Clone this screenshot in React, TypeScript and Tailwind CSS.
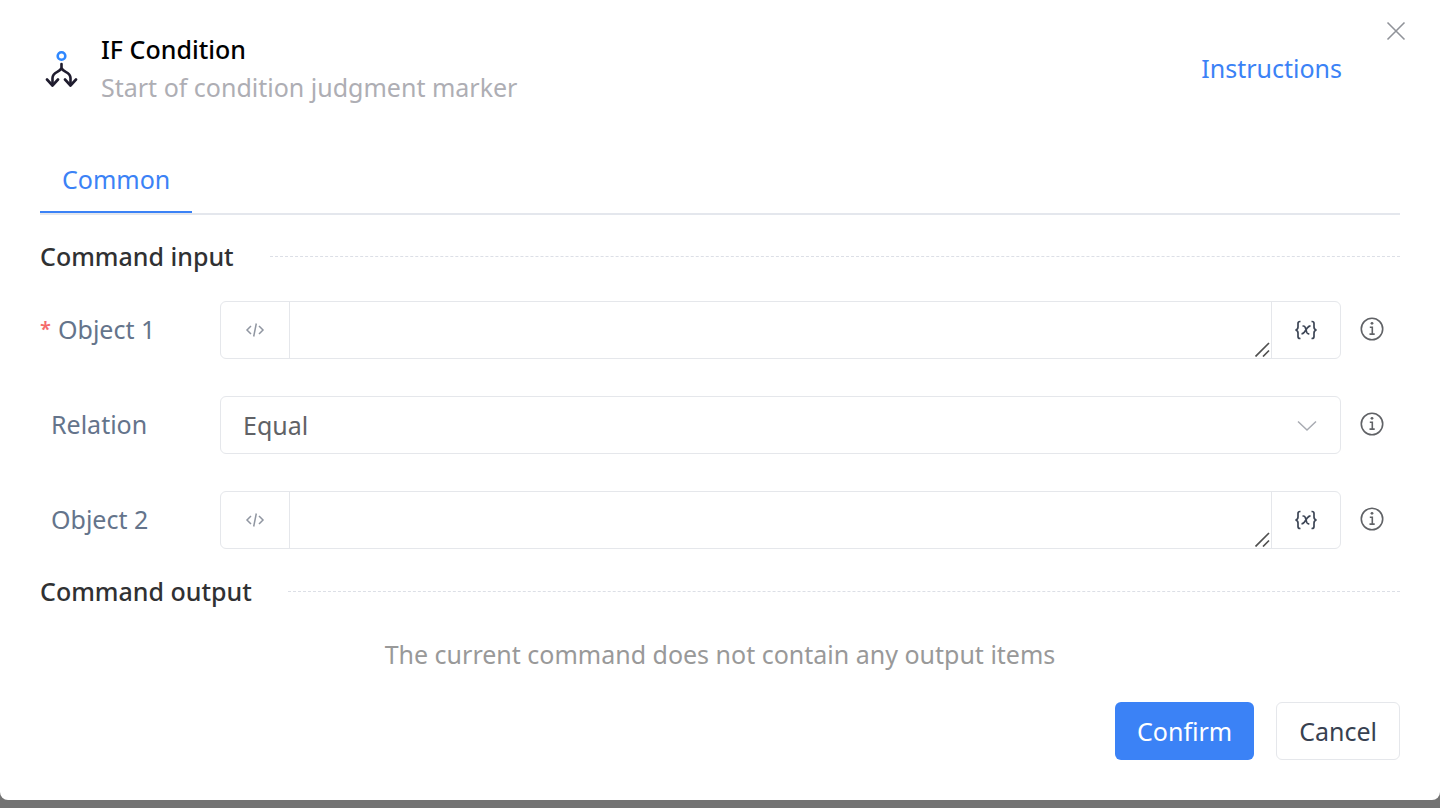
import React, { useId, useState } from "react";

function BranchIcon() {
  return (
    <svg width="34" height="38" viewBox="0 0 34 38" fill="none" aria-hidden="true" className="shrink-0">
      <circle cx="17.500" cy="7" r="3.800" stroke="#2f88ff" strokeWidth="2.600" />
      <g stroke="#1f1c2e" strokeWidth="2.600" strokeLinecap="round" strokeLinejoin="round">
        <path d="M17.500 15v4c-1.500 4.500-9 3.500-9 10v7M17.500 19c1.500 4.500 9 3.500 9 10v7" />
        <path d="M3 30.500 8.500 36.500l5.500-6M21 30.500l5.500 6 5.500-6" />
      </g>
    </svg>
  );
}

function CodeIcon() {
  return (
    <svg width="20" height="16" viewBox="0 0 20 16" fill="none" stroke="#9096a1" strokeWidth="1.5" aria-hidden="true">
      <path d="M6 4 2 8l4 4M14 4l4 4-4 4M11.300 1.500 8.700 14.500" />
    </svg>
  );
}

function VariableIcon() {
  return (
    <svg width="24" height="20" viewBox="0 0 24 20" fill="none" stroke="#3d4656" strokeWidth="1.7" aria-hidden="true">
      <path d="M6.500 1.500H6c-1.500 0-2 .8-2 2V7c0 1.700-.8 2.700-2.500 3C3.200 10.300 4 11.300 4 13v3.500c0 1.200.5 2 2 2h.5" />
      <path d="M17.500 1.500h.5c1.500 0 2 .8 2 2V7c0 1.700.8 2.700 2.500 3-1.700.3-2.500 1.300-2.500 3v3.500c0 1.200-.5 2-2 2h-.5" />
      <path d="M8.500 6h.8c1.200 0 1.700.6 2.100 1.700l1.300 4.500c.4 1.100.8 1.600 1.900 1.600h.7M16.500 5.900c-1.200.1-2 .6-2.900 1.700l-3.200 4.500c-.9 1.100-1.600 1.700-2.900 1.800" />
    </svg>
  );
}

function InfoIcon() {
  return (
    <svg width="24" height="24" viewBox="0 0 24 24" fill="none" stroke="#606266" strokeWidth="1.6" aria-hidden="true">
      <circle cx="12" cy="12" r="10.700" />
      <path d="M9.800 10.200H12.300v6.600M9.500 17.100h5.200" />
      <circle cx="12" cy="6.300" r="1.400" fill="#606266" stroke="none" />
    </svg>
  );
}

function InfoButton({ label }: { label: string }) {
  return (
    <button type="button" aria-label={label} className="ml-[19px] mr-4 shrink-0 pb-0.5">
      <InfoIcon />
    </button>
  );
}

function FieldLabel({ htmlFor, required, children }: { htmlFor: string; required?: boolean; children: React.ReactNode }) {
  return (
    <label htmlFor={htmlFor} className="flex w-45 shrink-0 items-center pb-0.5 text-[#64748b]">
      {required ? <span className="w-[18px] text-xl leading-10 font-semibold text-[#f56c6c]">*</span> : <span className="w-[11px]" />}
      {children}
    </label>
  );
}

function ExpressionField({ label, required }: { label: string; required?: boolean }) {
  const id = useId();
  return (
    <div className="flex items-center">
      <FieldLabel htmlFor={id} required={required}>{label}</FieldLabel>
      <div className="flex h-[58px] min-w-0 grow rounded-md border border-[#e5e7eb]">
        <button type="button" aria-label="Expression mode" className="flex w-[69px] shrink-0 items-center justify-center border-r border-[#e5e7eb]">
          <CodeIcon />
        </button>
        <div className="relative min-w-0 grow">
          <textarea id={id} rows={1} className="block h-full w-full resize-none overflow-hidden px-5 py-2 outline-none" />
          <svg width="15" height="15" viewBox="0 0 15 15" stroke="#505050" strokeWidth="1.7" aria-hidden="true" className="pointer-events-none absolute right-px bottom-px">
            <path d="M.500 14.500 14 1M8 14.500l6-6" />
          </svg>
        </div>
        <button type="button" aria-label="Insert variable" className="flex w-[69px] shrink-0 items-center justify-center border-l border-[#e5e7eb]">
          <VariableIcon />
        </button>
      </div>
      <InfoButton label={`About ${label}`} />
    </div>
  );
}

function RelationField() {
  const id = useId();
  const [value, setValue] = useState("Equal");
  return (
    <div className="flex items-center">
      <FieldLabel htmlFor={id}>Relation</FieldLabel>
      <div className="relative min-w-0 grow">
        <select
          id={id}
          value={value}
          onChange={(e) => setValue(e.target.value)}
          className="block h-[58px] w-full appearance-none rounded-md border border-[#e5e7eb] bg-white px-[22px] text-[#606266] outline-none"
        >
          <option>Equal</option>
        </select>
        <svg width="20" height="12" viewBox="0 0 20 12" fill="none" stroke="#a8abb2" strokeWidth="1.500" aria-hidden="true" className="pointer-events-none absolute top-6 right-6">
          <path d="m1 1.500 9 8.500 9-8.500" />
        </svg>
      </div>
      <InfoButton label="About Relation" />
    </div>
  );
}

function SectionTitle({ children }: { children: React.ReactNode }) {
  return (
    <div className="flex items-center gap-9">
      <h2 className="font-medium text-[#303133]">{children}</h2>
      <div className="grow border-t border-dashed border-[#dcdfe6]" />
    </div>
  );
}

export default function App() {
  return (
    <div className="min-h-screen bg-[#737373] pb-2 font-['Noto_Sans',sans-serif] text-[25px] leading-10">
      <main className="relative rounded-b-lg bg-white px-10 pt-[30px] pb-10">
        <button type="button" aria-label="Close" className="absolute top-[21px] right-[34px]">
          <svg width="20" height="20" viewBox="0 0 20 20" stroke="#909399" strokeWidth="1.600" aria-hidden="true">
            <path d="m1.500 1.500 17 17M18.500 1.500l-17 17" />
          </svg>
        </button>

        <header className="flex h-[76px] items-center">
          <div className="ml-1 flex grow items-center gap-[23px]">
            <BranchIcon />
            <div className="leading-[38px]">
              <h1 className="font-medium text-black">IF Condition</h1>
              <p className="text-[#aeaeb4]">Start of condition judgment marker</p>
            </div>
          </div>
          <a href="#instructions" className="mr-[58px] text-[#3b82f6]">Instructions</a>
        </header>

        <div role="tablist" className="mt-[43px] flex border-b-2 border-[#e4e7ed]">
          <button type="button" role="tab" aria-selected="true" className="h-16 border-b-2 border-[#3b82f6] px-[22px] pb-0.5 text-[#3b82f6]">
            Common
          </button>
        </div>

        <section className="mt-[21px]">
          <SectionTitle>Command input</SectionTitle>
          <form className="mt-[25px] flex flex-col gap-[37px]">
            <ExpressionField label="Object 1" required />
            <RelationField />
            <ExpressionField label="Object 2" />
          </form>
        </section>

        <section className="mt-[22px]">
          <SectionTitle>Command output</SectionTitle>
          <p className="mt-[23px] text-center text-[#999999]">The current command does not contain any output items</p>
        </section>

        <footer className="mt-7 flex justify-end gap-[22px]">
          <button type="button" className="h-[58px] rounded-md bg-[#3b82f6] px-[22px] text-white">Confirm</button>
          <button type="button" className="h-[58px] rounded-md border border-[#e5e7eb] px-[22px] text-[#374151]">Cancel</button>
        </footer>
      </main>
    </div>
  );
}
